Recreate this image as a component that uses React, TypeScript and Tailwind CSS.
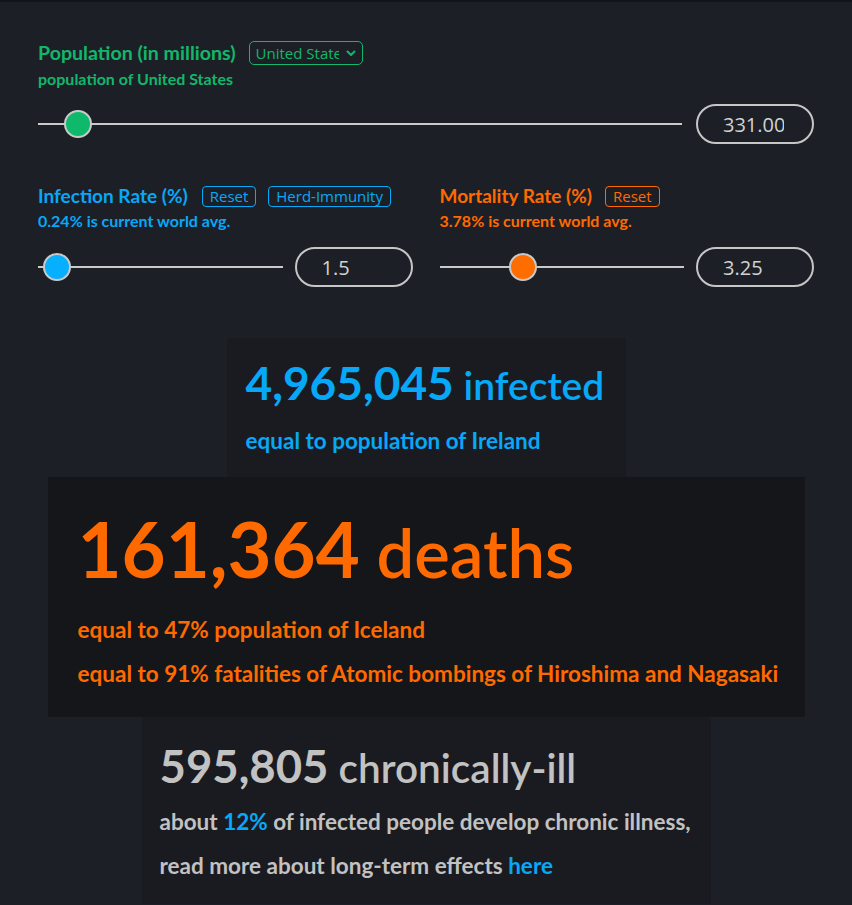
import React from 'react'

const FONT = { fontFamily: 'Lato, "Noto Sans", sans-serif' }
const UI = { fontFamily: '"Open Sans", sans-serif' }

type SliderProps = {
	color: string
	thumbLeft: number
}

function Slider({ color, thumbLeft }: SliderProps) {
	return (
		<div className="relative flex-1 h-[30px] flex items-center">
			<div className="w-full h-[2px] bg-[#c9c9c9]" />
			<div
				className="absolute top-[1px] w-[28px] h-[28px] rounded-full border-2 border-[#c9c9c9]"
				style={{ left: thumbLeft, backgroundColor: color }}
			/>
		</div>
	)
}

function NumberBox({ value }: { value: string }) {
	return (
		<input
			readOnly
			value={value}
			className="w-[118px] h-[40px] shrink-0 rounded-full border-2 border-[#c6c6c6] bg-transparent pl-[25px] pr-[28px] text-[20px] text-[#d2d2d2] outline-none"
			style={UI}
		/>
	)
}

function Chevron() {
	return (
		<svg width="12" height="12" viewBox="0 0 12 12" fill="none" stroke="currentColor" strokeWidth="2" strokeLinecap="round" strokeLinejoin="round">
			<path d="M2.5 4.5L6 8l3.5-3.5" />
		</svg>
	)
}

function OutlineButton({ label, color }: { label: string; color: string }) {
	return (
		<span
			className="px-[7px] h-[21px] flex items-center rounded-[4px] border text-[15px] leading-none"
			style={{ ...UI, color, borderColor: color }}
		>
			{label}
		</span>
	)
}

export default function App() {
	return (
		<div className="min-h-[905px] w-full bg-[#1d1f27] border-t-2 border-[#131418] overflow-hidden" style={FONT}>
			{/* controls */}
			<div className="px-[38px] pt-[38px]">
				<div className="flex items-center gap-[13px] h-[26px]">
					<span className="text-[19.6px] leading-[26px] font-bold text-[#12b76a]">Population (in millions)</span>
					<div className="flex items-center gap-[6px] w-[114px] h-[24px] border border-[#12b76a] rounded-[5px] pl-[6px] pr-[5px] text-[#12b76a]">
						<span className="flex-1 overflow-hidden whitespace-nowrap text-[15px] leading-none" style={UI}>United States</span>
						<Chevron />
					</div>
				</div>
				<div className="text-[16px] leading-[24px] font-bold text-[#12b76a] mt-[1px]">population of United States</div>
				<div className="flex items-center gap-[14px] mt-[13px]">
					<Slider color="#0fb96b" thumbLeft={26} />
					<NumberBox value="331.00" />
				</div>

				<div className="grid grid-cols-2 gap-[27px] mt-[39px]">
					<div>
						<div className="flex items-center h-[26px]">
							<span className="text-[19px] leading-[26px] font-bold text-[#06a8f7] mr-[14px]">Infection Rate (%)</span>
							<OutlineButton label="Reset" color="#06a8f7" />
							<span className="w-[12px]" />
							<OutlineButton label="Herd-Immunity" color="#06a8f7" />
						</div>
						<div className="text-[16px] leading-[24px] font-bold text-[#06a8f7]">0.24% is current world avg.</div>
						<div className="flex items-center gap-[12px] mt-[14px]">
							<Slider color="#06b0ff" thumbLeft={5} />
							<NumberBox value="1.5" />
						</div>
					</div>
					<div>
						<div className="flex items-center h-[26px]">
							<span className="text-[19px] leading-[26px] font-bold text-[#ff6a00] mr-[13px]">Mortality Rate (%)</span>
							<OutlineButton label="Reset" color="#ff6a00" />
						</div>
						<div className="text-[16px] leading-[24px] font-bold text-[#ff6a00]">3.78% is current world avg.</div>
						<div className="flex items-center gap-[12px] mt-[14px]">
							<Slider color="#ff6d00" thumbLeft={69} />
							<NumberBox value="3.25" />
						</div>
					</div>
				</div>
			</div>

			{/* results */}
			<div className="flex flex-col items-center mt-[51px]">
				<div className="w-[399px] h-[139px] bg-[#1a1b21] px-[19px] pt-[22px] text-[#06a8f7] whitespace-nowrap">
					<div className="leading-none">
						<span className="text-[46px] font-bold">4,965,045</span>
						<span className="text-[39px] font-semibold"> infected</span>
					</div>
					<div className="text-[22.5px] font-bold mt-[18px]">equal to population of Ireland</div>
				</div>
				<div className="w-[757px] h-[240px] bg-[#151619] px-[30px] pt-[34px] text-[#ff6a00] whitespace-nowrap">
					<div className="leading-none">
						<span className="text-[76px] font-bold">161,364</span>
						<span className="text-[67px] font-semibold"> deaths</span>
					</div>
					<div className="text-[22.5px] font-bold mt-[21px] leading-[44px]">equal to 47% population of Iceland</div>
					<div className="text-[22.5px] font-bold leading-[44px]">equal to 91% fatalities of Atomic bombings of Hiroshima and Nagasaki</div>
				</div>
				<div className="w-[569px] h-[187px] bg-[#1a1b20] px-[18px] pt-[26px] text-[#c2c2c2] whitespace-nowrap">
					<div className="leading-none">
						<span className="text-[45.5px] font-bold">595,805</span>
						<span className="text-[40.5px] font-semibold"> chronically-ill</span>
					</div>
					<div className="text-[22.5px] font-bold mt-[11px] leading-[44px]">
						about <span className="text-[#06a8f7]">12%</span> of infected people develop chronic illness,
					</div>
					<div className="text-[22.5px] font-bold leading-[44px]">
						read more about long-term effects <span className="text-[#06a8f7]">here</span>
					</div>
				</div>
			</div>
		</div>
	)
}
